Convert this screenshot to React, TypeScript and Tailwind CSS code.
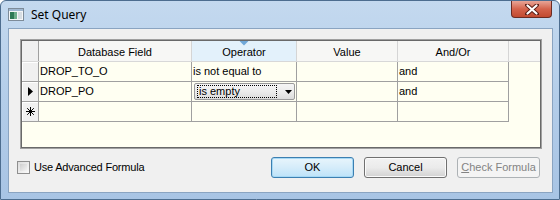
import React from "react";

const cellFont = { fontFamily: '"Liberation Sans", Arial, sans-serif' };

function HeaderCell({ w, children, active }: { w: string; children?: React.ReactNode; active?: boolean }) {
  return (
    <div
      className={`${w} h-full relative flex items-center justify-center border-r border-[#d5d5d5] ${
        active ? "bg-[#e3f1fb]" : "bg-[#f7f7f5]"
      } text-[11px] text-black`}
    >
      {active && (
        <svg className="absolute top-0 left-1/2 -translate-x-1/2" width="9" height="5" viewBox="0 0 9 5">
          <path d="M0 0 L9 0 L4.5 4.5 Z" fill="#6fa7d8" />
        </svg>
      )}
      <span className="pt-[2px]">{children}</span>
    </div>
  );
}

function RowHead({ children }: { children?: React.ReactNode }) {
  return (
    <div className="w-[17px] h-full bg-[#f0f0f0] border-r border-b border-[#a0a0a0] flex items-center justify-center shadow-[inset_1px_1px_0_#ffffff]">
      {children}
    </div>
  );
}

function Cell({ w, children }: { w: string; children?: React.ReactNode }) {
  return (
    <div className={`${w} h-full border-b border-r border-[#a0a0a0] flex items-center pl-[1px] text-[11px] text-black`}>
      {children}
    </div>
  );
}

function Row({ head, f, op, val, ao }: { head?: React.ReactNode; f?: React.ReactNode; op?: React.ReactNode; val?: React.ReactNode; ao?: React.ReactNode }) {
  return (
    <div className="flex h-[20px]">
      <RowHead>{head}</RowHead>
      <Cell w="w-[153px]">{f}</Cell>
      <Cell w="w-[105px]">{op}</Cell>
      <Cell w="w-[101px]">{val}</Cell>
      <Cell w="w-[111px]">{ao}</Cell>
    </div>
  );
}

export default function App() {
  return (
    <div
      className="w-[560px] h-[200px] flex flex-col bg-gradient-to-b from-[#c4d9ef] via-[#b3cde9] to-[#a8c4e4] border border-[#4d6d8f] rounded-t-[6px] overflow-hidden"
      style={cellFont}
    >
      {/* Title bar */}
      <div className="h-[27px] flex items-start shrink-0">
        <div className="mt-[7px] ml-[7px] w-[16px] h-[13px]">
          <svg width="16" height="13" viewBox="0 0 16 13">
            <rect x="0.5" y="0.5" width="15" height="12" fill="#f4f6f8" stroke="#7d8b99" />
            <rect x="1" y="1" width="14" height="2" fill="#9fb7d1" />
            <rect x="2" y="4" width="4" height="7" fill="#2f7a57" />
            <rect x="6" y="4" width="3" height="7" fill="#6fae8c" />
            <rect x="10" y="4" width="4" height="7" fill="#d7dde3" />
          </svg>
        </div>
        <div
          className="ml-[7px] mt-[5px] text-[12px] text-black"
          style={{ fontFamily: '"Noto Sans", "Open Sans", sans-serif' }}
        >
          Set Query
        </div>
        <div className="ml-auto mr-[7px] w-[41px] h-[17px] rounded-b-[4px] border border-t-0 border-[#6b2b22] bg-gradient-to-b from-[#e7a597] via-[#d4634c] to-[#c24a30] flex items-center justify-center">
          <svg width="14" height="11" viewBox="0 0 14 11">
            <path d="M2 1 L12 10 M12 1 L2 10" stroke="#5a1e16" strokeWidth="4" strokeLinecap="round" />
            <path d="M2.5 1.5 L11.5 9.5 M11.5 1.5 L2.5 9.5" stroke="#ffffff" strokeWidth="2.2" strokeLinecap="round" />
          </svg>
        </div>
      </div>

      {/* Client area */}
      <div className="mx-[7px] w-[545px] h-[165px] bg-[#f0f0f0] border border-[#8aa4c1] px-[11px] pt-[10px]">
        {/* Grid */}
        <div className="w-[522px] h-[110px] border border-[#a0a0a0] bg-[#fffff2]">
          <div className="w-full h-full border border-[#696969] flex flex-col">
            {/* header */}
            <div className="flex h-[21px] border-b border-[#d8d8d8]">
              <div className="w-[17px] h-full bg-[#f0f0f0] border-r border-[#a0a0a0]" />
              <HeaderCell w="w-[153px]">Database Field</HeaderCell>
              <HeaderCell w="w-[105px]" active>
                Operator
              </HeaderCell>
              <HeaderCell w="w-[101px]">Value</HeaderCell>
              <HeaderCell w="w-[111px]">And/Or</HeaderCell>
              <div className="flex-1 h-full bg-[#f7f7f5]" />
            </div>
            <Row f="DROP_TO_O" op="is not equal to" ao="and" />
            <Row
              head={
                <svg width="5" height="9" viewBox="0 0 5 9">
                  <path d="M0 0 L5 4.5 L0 9 Z" fill="#000" />
                </svg>
              }
              f="DROP_PO"
              op={
                <div className="ml-[1px] w-[101px] h-[17px] rounded-[2px] border border-[#9a9a9a] bg-gradient-to-b from-[#f5f5f5] via-[#ececec] to-[#dcdcdc] flex items-center pl-[2px]">
                  <div className="w-[80px] h-[13px] border border-dotted border-black flex items-center leading-none pl-[1px]">
                    is empty
                  </div>
                  <svg className="ml-[8px]" width="7" height="4" viewBox="0 0 7 4">
                    <path d="M0 0 L7 0 L3.5 4 Z" fill="#000" />
                  </svg>
                </div>
              }
              ao="and"
            />
            <Row
              head={
                <svg width="9" height="9" viewBox="0 0 9 9">
                  <path
                    d="M4.5 0 V9 M0 4.5 H9 M1.2 1.2 L7.8 7.8 M7.8 1.2 L1.2 7.8"
                    stroke="#000"
                    strokeWidth="1"
                  />
                </svg>
              }
            />
          </div>
        </div>

        {/* Bottom row */}
        <div className="flex items-center mt-[8px] h-[21px]">
          <div className="ml-[-3px] w-[13px] h-[13px] border border-[#8f8f8f] bg-gradient-to-br from-[#dcdcdc] to-[#fbfbfb] p-[2px]">
            <div className="w-full h-full bg-gradient-to-br from-[#cfcfcf] to-[#f4f4f4]" />
          </div>
          <span className="ml-[4px] text-[11px] text-black tracking-[-0.2px]">Use Advanced Formula</span>
          <div className="ml-auto flex gap-[10px] mr-[1px]">
            <button className="w-[83px] h-[21px] rounded-[3px] border border-[#3c7fb1] bg-gradient-to-b from-[#e8f5fc] via-[#d5ecfa] to-[#bde3f9] text-[11px] text-black shadow-[inset_0_0_0_1px_#a7d9f5]">
              OK
            </button>
            <button className="w-[83px] h-[21px] rounded-[3px] border border-[#707070] bg-gradient-to-b from-[#f2f2f2] via-[#ebebeb] to-[#d2d2d2] text-[11px] text-black shadow-[inset_0_0_0_1px_#fbfbfb]">
              Cancel
            </button>
            <button className="w-[83px] h-[21px] rounded-[3px] border border-[#adb2b5] bg-[#f4f4f4] text-[11px] text-[#838383]">
              <span className="underline">C</span>heck Formula
            </button>
          </div>
        </div>
      </div>
    </div>
  );
}
